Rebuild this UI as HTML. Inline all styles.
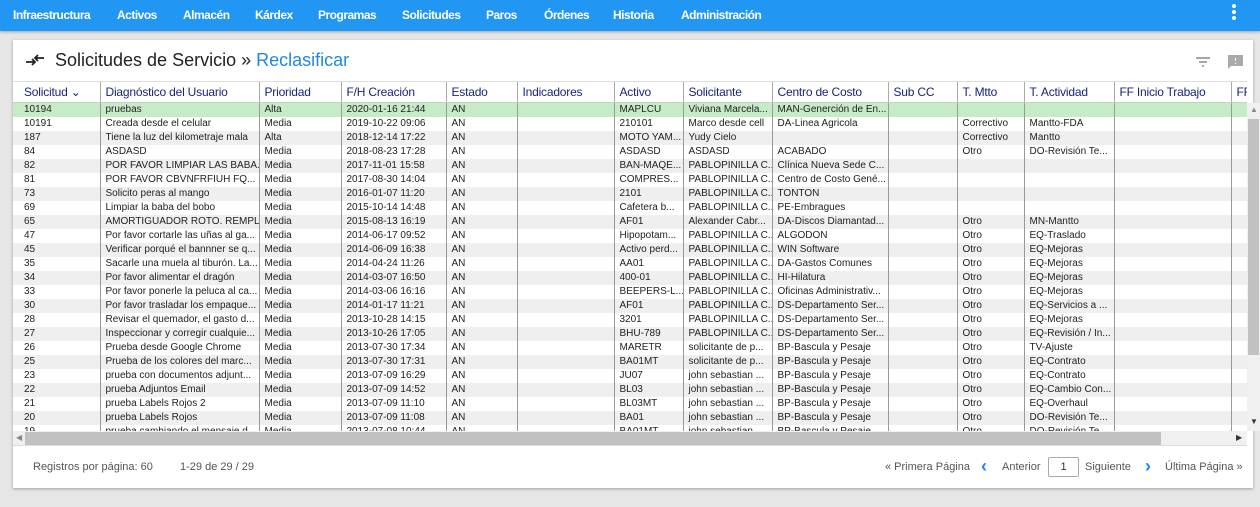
<!DOCTYPE html>
<html><head><meta charset="utf-8"><style>
*{box-sizing:border-box;margin:0;padding:0}
body{width:1260px;height:507px;background:#e6e6e6;font-family:"Liberation Sans",sans-serif;overflow:hidden;position:relative}
.nav{position:absolute;left:0;top:0;width:1260px;height:31px;background:#2196f3;box-shadow:0 1px 3px rgba(0,0,0,.3)}
.nav span{position:absolute;top:8px;color:#fff;font-size:12px;font-weight:bold;letter-spacing:-.5px}
.dots{position:absolute;left:1232px;top:4px;width:4px}
.dots i{display:block;width:4px;height:4px;border-radius:2px;background:#fff;margin-bottom:2px}
.card{position:absolute;left:13px;top:40px;width:1240px;height:448px;background:#fff;box-shadow:0 1px 3px rgba(0,0,0,.3)}
.title{position:absolute;left:42px;top:50px;font-size:18px;color:#222}
.title b{font-weight:normal;color:#1e88e5}
.grid{position:absolute;left:13px;top:81px;width:1234px;height:350px;overflow:hidden}
table{border-collapse:collapse;table-layout:fixed;width:1250px}
th{height:21px;text-align:left;font-weight:normal;color:#1a237e;font-size:12px;padding-left:5px;border-left:1px solid #aaa;border-bottom:1px solid #ccc;border-top:1px solid #ddd;white-space:nowrap;overflow:hidden;letter-spacing:-.2px}
th:first-child{border-left:none;padding-left:11px}
td{height:14px;font-size:10px;color:#222;padding-left:5px;border-left:1px solid #999;white-space:nowrap;overflow:hidden;line-height:14px}
td:first-child{border-left:none;padding-left:11px}
tr.g td{background:#efefef}
tr.s td{background:#c6ecc6}
.vs{position:absolute;left:1247px;top:103px;width:13px;height:328px;background:#f0f0f0}
.vs .t{position:absolute;left:1px;top:16px;width:11px;height:236px;background:#c1c1c1}
.hs{position:absolute;left:13px;top:431px;width:1234px;height:15px;background:#f0f0f0;border-bottom:1px solid #ddd}
.hs .t{position:absolute;left:12px;top:1px;width:1136px;height:13px;background:#c1c1c1}
.foot{position:absolute;top:461px;font-size:11px;color:#555}
.pg{position:absolute;left:1048px;top:457px;width:31px;height:20px;border:1px solid #aaa;border-radius:2px;font-size:11px;text-align:center;line-height:18px;color:#333}
.ar{position:absolute;top:456px;color:#1e88e5;font-size:18px;font-weight:bold}
</style></head><body>
<div class="nav">
<span style="left:13px">Infraestructura</span><span style="left:117px">Activos</span><span style="left:183px">Almacén</span><span style="left:255px">Kárdex</span><span style="left:318px">Programas</span><span style="left:402px">Solicitudes</span><span style="left:486px">Paros</span><span style="left:544px">Órdenes</span><span style="left:613px">Historia</span><span style="left:681px">Administración</span>
<div class="dots"><i></i><i></i><i></i></div>
</div>
<div class="card"></div>
<svg style="position:absolute;left:25px;top:53px" width="20" height="14" viewBox="0 0 20 14"><path d="M1 9h9M7 6l3 3-3 3" stroke="#222" stroke-width="1.8" fill="none"/><path d="M19 5h-9M13 2l-3 3 3 3" stroke="#222" stroke-width="1.8" fill="none"/></svg>
<div class="title" style="left:55px">Solicitudes de Servicio » <b>Reclasificar</b></div>
<svg style="position:absolute;left:1196px;top:57px" width="14" height="10"><path d="M0 1h14M3 5h8M6 9h2" stroke="#888" stroke-width="1.5"/></svg>
<svg style="position:absolute;left:1228px;top:55px" width="16" height="15"><path d="M0 0h15v11H3l-3 3z" fill="#aaa"/><path d="M7.5 3v3M7.5 8v1" stroke="#fff" stroke-width="1.3"/></svg>
<div class="grid"><table>
<colgroup><col style="width:87px"><col style="width:159px"><col style="width:82px"><col style="width:105px"><col style="width:71px"><col style="width:97px"><col style="width:69px"><col style="width:89px"><col style="width:116px"><col style="width:69px"><col style="width:67px"><col style="width:90px"><col style="width:117px"><col style="width:32px"></colgroup>
<tr><th>Solicitud ⌄</th><th>Diagnóstico del Usuario</th><th>Prioridad</th><th>F/H Creación</th><th>Estado</th><th>Indicadores</th><th>Activo</th><th>Solicitante</th><th>Centro de Costo</th><th>Sub CC</th><th>T. Mtto</th><th>T. Actividad</th><th>FF Inicio Trabajo</th><th>FF</th></tr>
<tr class="s"><td>10194</td><td>pruebas</td><td>Alta</td><td>2020-01-16 21:44</td><td>AN</td><td></td><td>MAPLCU</td><td>Viviana Marcela...</td><td>MAN-Generción de En...</td><td></td><td></td><td></td><td></td><td></td></tr>
<tr><td>10191</td><td>Creada desde el celular</td><td>Media</td><td>2019-10-22 09:06</td><td>AN</td><td></td><td>210101</td><td>Marco desde cell</td><td>DA-Linea Agricola</td><td></td><td>Correctivo</td><td>Mantto-FDA</td><td></td><td></td></tr>
<tr class="g"><td>187</td><td>Tiene la luz del kilometraje mala</td><td>Alta</td><td>2018-12-14 17:22</td><td>AN</td><td></td><td>MOTO YAM...</td><td>Yudy Cielo</td><td></td><td></td><td>Correctivo</td><td>Mantto</td><td></td><td></td></tr>
<tr><td>84</td><td>ASDASD</td><td>Media</td><td>2018-08-23 17:28</td><td>AN</td><td></td><td>ASDASD</td><td>ASDASD</td><td>ACABADO</td><td></td><td>Otro</td><td>DO-Revisión Te...</td><td></td><td></td></tr>
<tr class="g"><td>82</td><td>POR FAVOR LIMPIAR LAS BABA...</td><td>Media</td><td>2017-11-01 15:58</td><td>AN</td><td></td><td>BAN-MAQE...</td><td>PABLOPINILLA C...</td><td>Clínica Nueva Sede C...</td><td></td><td></td><td></td><td></td><td></td></tr>
<tr><td>81</td><td>POR FAVOR CBVNFRFIUH FQ...</td><td>Media</td><td>2017-08-30 14:04</td><td>AN</td><td></td><td>COMPRES...</td><td>PABLOPINILLA C...</td><td>Centro de Costo Gené...</td><td></td><td></td><td></td><td></td><td></td></tr>
<tr class="g"><td>73</td><td>Solicito peras al mango</td><td>Media</td><td>2016-01-07 11:20</td><td>AN</td><td></td><td>2101</td><td>PABLOPINILLA C...</td><td>TONTON</td><td></td><td></td><td></td><td></td><td></td></tr>
<tr><td>69</td><td>Limpiar la baba del bobo</td><td>Media</td><td>2015-10-14 14:48</td><td>AN</td><td></td><td>Cafetera b...</td><td>PABLOPINILLA C...</td><td>PE-Embragues</td><td></td><td></td><td></td><td></td><td></td></tr>
<tr class="g"><td>65</td><td>AMORTIGUADOR ROTO. REMPL...</td><td>Media</td><td>2015-08-13 16:19</td><td>AN</td><td></td><td>AF01</td><td>Alexander Cabr...</td><td>DA-Discos Diamantad...</td><td></td><td>Otro</td><td>MN-Mantto</td><td></td><td></td></tr>
<tr><td>47</td><td>Por favor cortarle las uñas al ga...</td><td>Media</td><td>2014-06-17 09:52</td><td>AN</td><td></td><td>Hipopotam...</td><td>PABLOPINILLA C...</td><td>ALGODON</td><td></td><td>Otro</td><td>EQ-Traslado</td><td></td><td></td></tr>
<tr class="g"><td>45</td><td>Verificar porqué el bannner se q...</td><td>Media</td><td>2014-06-09 16:38</td><td>AN</td><td></td><td>Activo perd...</td><td>PABLOPINILLA C...</td><td>WIN Software</td><td></td><td>Otro</td><td>EQ-Mejoras</td><td></td><td></td></tr>
<tr><td>35</td><td>Sacarle una muela al tiburón. La...</td><td>Media</td><td>2014-04-24 11:26</td><td>AN</td><td></td><td>AA01</td><td>PABLOPINILLA C...</td><td>DA-Gastos Comunes</td><td></td><td>Otro</td><td>EQ-Mejoras</td><td></td><td></td></tr>
<tr class="g"><td>34</td><td>Por favor alimentar el dragón</td><td>Media</td><td>2014-03-07 16:50</td><td>AN</td><td></td><td>400-01</td><td>PABLOPINILLA C...</td><td>HI-Hilatura</td><td></td><td>Otro</td><td>EQ-Mejoras</td><td></td><td></td></tr>
<tr><td>33</td><td>Por favor ponerle la peluca al ca...</td><td>Media</td><td>2014-03-06 16:16</td><td>AN</td><td></td><td>BEEPERS-L...</td><td>PABLOPINILLA C...</td><td>Oficinas Administrativ...</td><td></td><td>Otro</td><td>EQ-Mejoras</td><td></td><td></td></tr>
<tr class="g"><td>30</td><td>Por favor trasladar los empaque...</td><td>Media</td><td>2014-01-17 11:21</td><td>AN</td><td></td><td>AF01</td><td>PABLOPINILLA C...</td><td>DS-Departamento Ser...</td><td></td><td>Otro</td><td>EQ-Servicios a ...</td><td></td><td></td></tr>
<tr><td>28</td><td>Revisar el quemador, el gasto d...</td><td>Media</td><td>2013-10-28 14:15</td><td>AN</td><td></td><td>3201</td><td>PABLOPINILLA C...</td><td>DS-Departamento Ser...</td><td></td><td>Otro</td><td>EQ-Mejoras</td><td></td><td></td></tr>
<tr class="g"><td>27</td><td>Inspeccionar y corregir cualquie...</td><td>Media</td><td>2013-10-26 17:05</td><td>AN</td><td></td><td>BHU-789</td><td>PABLOPINILLA C...</td><td>DS-Departamento Ser...</td><td></td><td>Otro</td><td>EQ-Revisión / In...</td><td></td><td></td></tr>
<tr><td>26</td><td>Prueba desde Google Chrome</td><td>Media</td><td>2013-07-30 17:34</td><td>AN</td><td></td><td>MARETR</td><td>solicitante de p...</td><td>BP-Bascula y Pesaje</td><td></td><td>Otro</td><td>TV-Ajuste</td><td></td><td></td></tr>
<tr class="g"><td>25</td><td>Prueba de los colores del marc...</td><td>Media</td><td>2013-07-30 17:31</td><td>AN</td><td></td><td>BA01MT</td><td>solicitante de p...</td><td>BP-Bascula y Pesaje</td><td></td><td>Otro</td><td>EQ-Contrato</td><td></td><td></td></tr>
<tr><td>23</td><td>prueba con documentos adjunt...</td><td>Media</td><td>2013-07-09 16:29</td><td>AN</td><td></td><td>JU07</td><td>john sebastian ...</td><td>BP-Bascula y Pesaje</td><td></td><td>Otro</td><td>EQ-Contrato</td><td></td><td></td></tr>
<tr class="g"><td>22</td><td>prueba Adjuntos Email</td><td>Media</td><td>2013-07-09 14:52</td><td>AN</td><td></td><td>BL03</td><td>john sebastian ...</td><td>BP-Bascula y Pesaje</td><td></td><td>Otro</td><td>EQ-Cambio Con...</td><td></td><td></td></tr>
<tr><td>21</td><td>prueba Labels Rojos 2</td><td>Media</td><td>2013-07-09 11:10</td><td>AN</td><td></td><td>BL03MT</td><td>john sebastian ...</td><td>BP-Bascula y Pesaje</td><td></td><td>Otro</td><td>EQ-Overhaul</td><td></td><td></td></tr>
<tr class="g"><td>20</td><td>prueba Labels Rojos</td><td>Media</td><td>2013-07-09 11:08</td><td>AN</td><td></td><td>BA01</td><td>john sebastian ...</td><td>BP-Bascula y Pesaje</td><td></td><td>Otro</td><td>DO-Revisión Te...</td><td></td><td></td></tr>
<tr><td>19</td><td>prueba cambiando el mensaje d...</td><td>Media</td><td>2013-07-08 10:44</td><td>AN</td><td></td><td>BA01MT</td><td>john sebastian ...</td><td>BP-Bascula y Pesaje</td><td></td><td>Otro</td><td>DO-Revisión Te...</td><td></td><td></td></tr>
</table></div>
<div class="vs"><div class="t"></div><span style="position:absolute;left:3px;top:2px;font-size:8px;color:#888">▲</span><span style="position:absolute;left:3px;top:314px;font-size:8px;color:#333">▼</span></div>
<div class="hs"><div class="t"></div><span style="position:absolute;left:3px;top:2px;font-size:8px;color:#888">◀</span><span style="position:absolute;left:1223px;top:2px;font-size:8px;color:#333">▶</span></div>
<div class="foot" style="left:33px">Registros por página: 60</div>
<div class="foot" style="left:180px">1-29 de 29 / 29</div>
<div class="foot" style="left:885px">« Primera Página</div>
<div class="ar" style="left:981px">‹</div>
<div class="foot" style="left:1002px">Anterior</div>
<div class="pg">1</div>
<div class="foot" style="left:1085px">Siguiente</div>
<div class="ar" style="left:1145px">›</div>
<div class="foot" style="left:1165px">Última Página »</div>
</body></html>
